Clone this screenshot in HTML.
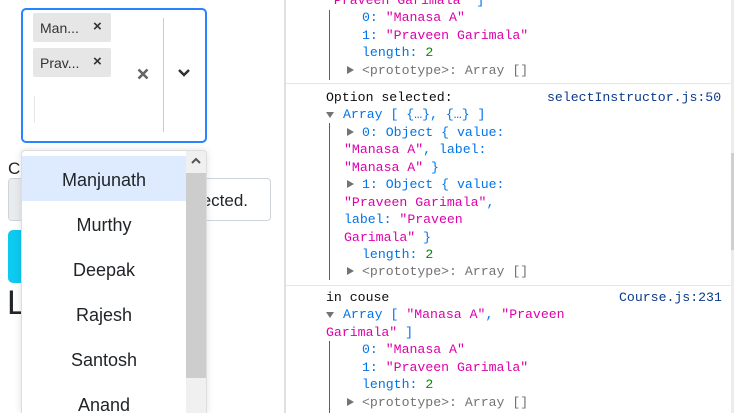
<!DOCTYPE html>
<html><head><style>
html,body{margin:0;width:734px;height:413px;overflow:hidden}
body{background:#fff;position:relative;font-family:"Liberation Sans",sans-serif}
.a{position:absolute}
.m{font-family:"Liberation Mono",monospace;font-size:13.2px;line-height:17.45px}
.m div{height:17.45px;position:relative;white-space:pre}
.k{color:#0074e8}.s{color:#dd00a9}.n{color:#058b00}.g{color:#737373}.t{color:#0c0c0d}.l{color:#0a3a8c}
.tri{position:absolute;top:0;width:0;height:0}
.r{border-left:7px solid #737373;border-top:4.5px solid transparent;border-bottom:4.5px solid transparent;top:4px}
.d{border-top:6px solid #737373;border-left:4.5px solid transparent;border-right:4.5px solid transparent;top:6px}
</style></head><body>
<div class="a" style="left:8px;top:159px;font-size:17px;color:#212529">Co</div>
<div class="a" style="left:8px;top:178px;width:263px;height:43px;border:1px solid #ced4da;border-radius:4px;box-sizing:border-box;background:#fff;overflow:hidden">
 <div class="a" style="left:0;top:0;width:40px;height:43px;background:#e9ecef"></div>
 <div class="a" style="right:22px;top:12px;font-size:17px;color:#212529">ected.</div>
</div>
<div class="a" style="left:8px;top:230px;width:40px;height:53px;background:#0dcaf0;border-radius:5px"></div>
<div class="a" style="left:7px;top:284px;font-size:34px;color:#212529">L</div>
<div class="a" style="left:21px;top:8px;width:186px;height:135px;border:2px solid #2684ff;border-radius:5px;box-sizing:border-box;background:#fff"></div>
<div class="a" style="left:33px;top:13px;width:78px;height:29px;background:#e6e6e6;border-radius:2px;font-size:14px;color:#333"><span class="a" style="left:7px;top:7px">Man...</span><span class="a" style="left:60px;top:5px;font-weight:bold;font-size:15px">×</span></div>
<div class="a" style="left:33px;top:48px;width:78px;height:29px;background:#e6e6e6;border-radius:2px;font-size:14px;color:#333"><span class="a" style="left:7px;top:7px">Prav...</span><span class="a" style="left:60px;top:5px;font-weight:bold;font-size:15px">×</span></div>
<div class="a" style="left:34px;top:96px;width:1px;height:27px;background:#e6e6e6"></div>
<svg class="a" style="left:137px;top:68px" width="12" height="12"><path d="M1.5 1.5 L10.5 10.5 M10.5 1.5 L1.5 10.5" stroke="#666" stroke-width="2.6"/></svg>
<div class="a" style="left:163px;top:18px;width:1px;height:114px;background:#ccc"></div>
<svg class="a" style="left:177px;top:68px" width="14" height="10"><path d="M2 2 L7 7 L12 2" stroke="#333" stroke-width="2.5" fill="none"/></svg>
<div class="a" style="left:21px;top:150px;width:186px;height:263px;border:1px solid #ddd;border-bottom:none;border-radius:4px 4px 0 0;box-sizing:border-box;background:#fff;box-shadow:0 0 8px rgba(0,0,0,.12);overflow:hidden;font-size:18px;color:#212529;text-align:center">
 <div class="a" style="left:0;top:5px;width:164px;height:45px;background:#deebff"></div>
 <div class="a" style="left:0;top:19px;width:164px">Manjunath</div>
 <div class="a" style="left:0;top:64px;width:164px">Murthy</div>
 <div class="a" style="left:0;top:109px;width:164px">Deepak</div>
 <div class="a" style="left:0;top:154px;width:164px">Rajesh</div>
 <div class="a" style="left:0;top:199px;width:164px">Santosh</div>
 <div class="a" style="left:0;top:244px;width:164px">Anand</div>
 <div class="a" style="left:164px;top:0;width:21px;height:263px;background:#f0f0f0"></div>
 <div class="a" style="left:164px;top:22px;width:21px;height:205px;background:#cdcdcd"></div>
 <svg class="a" style="left:168px;top:6px" width="12" height="8"><path d="M2 6 L6 2 L10 6" stroke="#555" stroke-width="2" fill="none"/></svg>
</div>
<div class="a" style="left:284px;top:0;width:2px;height:413px;background:#e0e0e0"></div>
<div class="a" style="left:731px;top:0;width:3px;height:413px;background:#ececec"></div>
<div class="a" style="left:731px;top:153px;width:3px;height:97px;background:#cfcfcf"></div>
<div class="a" style="left:286px;top:83px;width:445px;height:1px;background:#e6e6e6"></div>
<div class="a" style="left:286px;top:285px;width:445px;height:1px;background:#e6e6e6"></div>
<div class="a" style="left:329px;top:10px;width:1px;height:70px;background:#0074e8"></div>
<div class="a" style="left:329px;top:123px;width:1px;height:157px;background:#0074e8"></div>
<div class="a" style="left:329px;top:341px;width:1px;height:72px;background:#0074e8"></div>

<div class="a m" style="left:326px;top:-8px"><div><span class="s">"Praveen Garimala" </span><span class="k">]</span></div><div style="left:36px"><span class="k">0: </span><span class="s">"Manasa A"</span></div><div style="left:36px"><span class="k">1: </span><span class="s">"Praveen Garimala"</span></div><div style="left:36px"><span class="k">length: </span><span class="n">2</span></div><div style="left:36px"><i class="tri r" style="left:-15px"></i><span class="g">&lt;prototype&gt;: Array []</span></div></div>

<div class="a m" style="left:326px;top:89px"><div><span class="t">Option selected:</span></div><div style="left:17px"><i class="tri d" style="left:-17px"></i><span class="k">Array [ {…}, {…} ]</span></div><div style="left:36px"><i class="tri r" style="left:-15px"></i><span class="k">0: Object { value:</span></div><div style="left:18px"><span class="s">"Manasa A"</span><span class="k">, label:</span></div><div style="left:18px"><span class="s">"Manasa A"</span><span class="k"> }</span></div><div style="left:36px"><i class="tri r" style="left:-15px"></i><span class="k">1: Object { value:</span></div><div style="left:18px"><span class="s">"Praveen Garimala"</span><span class="k">,</span></div><div style="left:18px"><span class="k">label: </span><span class="s">"Praveen</span></div><div style="left:18px"><span class="s">Garimala"</span><span class="k"> }</span></div><div style="left:36px"><span class="k">length: </span><span class="n">2</span></div><div style="left:36px"><i class="tri r" style="left:-15px"></i><span class="g">&lt;prototype&gt;: Array []</span></div></div>
<div class="a m l" style="left:547px;top:89px"><div>selectInstructor.js:50</div></div>

<div class="a m" style="left:326px;top:289px"><div><span class="t">in couse</span></div><div style="left:17px"><i class="tri d" style="left:-17px"></i><span class="k">Array [ </span><span class="s">"Manasa A"</span><span class="k">, </span><span class="s">"Praveen</span></div><div><span class="s">Garimala"</span><span class="k"> ]</span></div><div style="left:36px"><span class="k">0: </span><span class="s">"Manasa A"</span></div><div style="left:36px"><span class="k">1: </span><span class="s">"Praveen Garimala"</span></div><div style="left:36px"><span class="k">length: </span><span class="n">2</span></div><div style="left:36px"><i class="tri r" style="left:-15px"></i><span class="g">&lt;prototype&gt;: Array []</span></div></div>
<div class="a m l" style="left:619px;top:289px"><div>Course.js:231</div></div>
</body></html>
